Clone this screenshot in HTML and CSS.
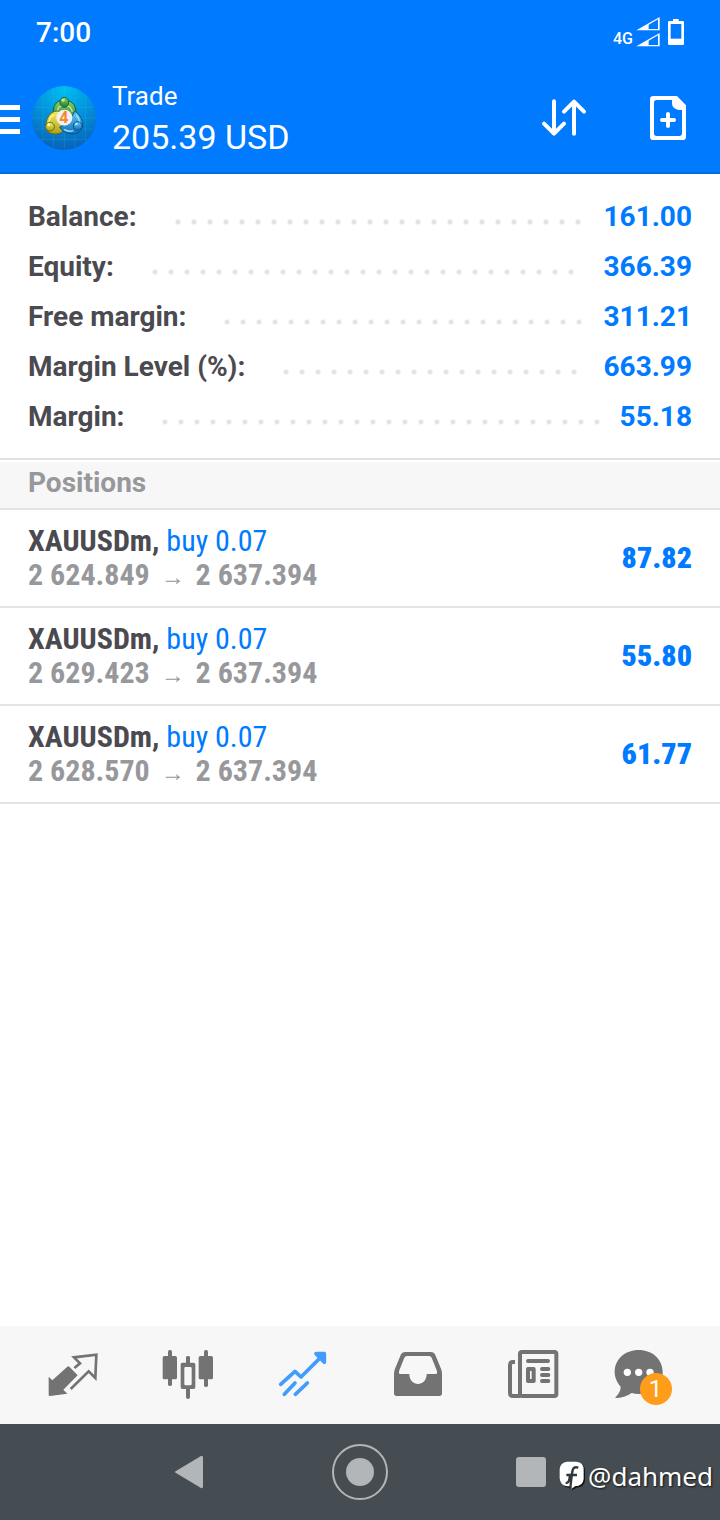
FILE: index.html
```html
<!DOCTYPE html>
<html lang="en">
<head>
<meta charset="utf-8">
<meta name="viewport" content="width=device-width, initial-scale=1">
<title>Trade</title>
<link rel="stylesheet" href="styles.css">
</head>
<body>
<header class="top">
  <div class="status">
    <span class="clock">7:00</span>
    <div class="signals">
      <span class="network">4G</span>
      <svg class="bars" viewBox="0 0 72 90" aria-hidden="true"><path d="M1 40 71 0V40ZM1 88 71 48V88Z" fill="#fff"/><path d="M38 23 66 7V36H38ZM38 71 66 55V84H38Z" fill="#007aff"/></svg>
      <svg class="battery" viewBox="0 0 48 78" aria-hidden="true"><path fill="#fff" d="M15 0H32V6H44Q48 6 48 10V74Q48 78 44 78H4Q0 78 0 74V10Q0 6 4 6H15Z"/><path fill="#007aff" d="M8 15H40V59H8Z"/></svg>
    </div>
  </div>
  <div class="appbar">
    <button class="menu" aria-label="Menu"><i></i><i></i><i></i></button>
    <svg class="avatar" viewBox="0 0 192 192" role="img" aria-label="Account">
      <defs>
        <radialGradient id="sky" cx="50%" cy="5%" r="95%"><stop offset="0" stop-color="#00bdf2"/><stop offset=".5" stop-color="#0292da"/><stop offset="1" stop-color="#0862b8"/></radialGradient>
        <linearGradient id="green" x2="0" y2="1"><stop offset="0" stop-color="#8fd070"/><stop offset="1" stop-color="#1d7c2b"/></linearGradient>
        <linearGradient id="yellow" x2="0" y2="1"><stop offset="0" stop-color="#f3ec62"/><stop offset="1" stop-color="#aba21b"/></linearGradient>
        <linearGradient id="blue" x2="0" y2="1"><stop offset="0" stop-color="#64c8f2"/><stop offset="1" stop-color="#0d70bb"/></linearGradient>
      </defs>
      <circle cx="96" cy="96" r="96" fill="url(#sky)"/>
      <path d="M32 26V167M64 7V185M97 0V192M129 7V185M160 25V167M8 64H184M0 96H192M8 129H184M26 160H166" stroke="#54c9ff" stroke-opacity=".25" stroke-width="2"/>
      <path d="M64 76C64 52 80 42 97 42S132 53 132 78C132 91 125 103 112 110L82 108C70 102 64 91 64 76Z" fill="url(#green)" stroke="#135f35" stroke-width="3"/>
      <path d="M76 78C76 64 84 58 97 58S119 65 121 78" fill="none" stroke="#b9e69b" stroke-width="4"/>
      <path d="M75 75C91 76 105 87 104 108 103 132 88 145 69 144 51 144 38 133 42 113 44 96 54 77 75 75Z" fill="url(#yellow)" stroke="#686611" stroke-width="3"/>
      <path d="M66 87C54 92 50 105 52 116" fill="none" stroke="#fffbb0" stroke-width="4"/>
      <path d="M128 76C145 84 154 106 152 122 148 139 130 147 112 143 99 141 88 134 83 123L108 112Z" fill="url(#blue)" stroke="#075392" stroke-width="3"/>
      <path d="M132 87Q144 99 142 114M96 130Q109 139 124 134" fill="none" stroke="#a0e1fc" stroke-width="4"/>
      <ellipse cx="97" cy="49" rx="13" ry="15" fill="url(#green)" stroke="#12652b" stroke-width="3"/>
      <circle cx="54" cy="122" r="13" fill="url(#yellow)" stroke="#706b13" stroke-width="3"/>
      <circle cx="137" cy="120" r="13" fill="url(#blue)" stroke="#07508f" stroke-width="3"/>
      <ellipse cx="93" cy="43" rx="5" ry="4" fill="#c5eaa9"/><circle cx="50" cy="116" r="4" fill="#fffbb4"/><circle cx="133" cy="114" r="4" fill="#b3e7ff"/>
      <circle cx="97" cy="95" r="24" fill="#f3f1f0"/>
      <text class="avatar-mark" x="96" y="112" text-anchor="middle">4</text>
    </svg>
    <div class="heading">
      <h1 class="title">Trade</h1>
      <p class="total">205.39 USD</p>
    </div>
    <div class="actions">
      <button class="action" aria-label="Sort"><svg viewBox="0 0 144 144" fill="none" stroke="#fff" stroke-width="12" stroke-linecap="round" stroke-linejoin="round"><path d="M42 22V118M12 89 42 119 72 89M102 119V23M72 53 102 23 132 53"/></svg></button>
      <button class="action" aria-label="New order"><svg viewBox="0 0 144 144"><path fill="#fff" fill-rule="evenodd" d="M28 6H99L126 34V128Q126 138 116 138H28Q18 138 18 128V16Q18 6 28 6ZM38 18Q30 18 30 26V118Q30 126 38 126H106Q114 126 114 118V48H104Q84 43 84 28V18Z"/><path d="M72 60V96M54 78H90" fill="none" stroke="#fff" stroke-width="12" stroke-linecap="round"/></svg></button>
    </div>
  </div>
</header>
<main class="content">
  <dl class="summary">
    <div class="line"><dt>Balance:</dt><dd>161.00</dd></div>
    <div class="line"><dt>Equity:</dt><dd>366.39</dd></div>
    <div class="line"><dt>Free margin:</dt><dd>311.21</dd></div>
    <div class="line"><dt>Margin Level (%):</dt><dd>663.99</dd></div>
    <div class="line"><dt>Margin:</dt><dd>55.18</dd></div>
  </dl>
  <h2 class="section">Positions</h2>
  <ul class="positions">
    <li class="position"><div><p class="symbol">XAUUSDm, <span class="side">buy 0.07</span></p><p class="prices">2 624.849 <span class="arrow">→</span> 2 637.394</p></div><strong class="profit">87.82</strong></li>
    <li class="position"><div><p class="symbol">XAUUSDm, <span class="side">buy 0.07</span></p><p class="prices">2 629.423 <span class="arrow">→</span> 2 637.394</p></div><strong class="profit">55.80</strong></li>
    <li class="position"><div><p class="symbol">XAUUSDm, <span class="side">buy 0.07</span></p><p class="prices">2 628.570 <span class="arrow">→</span> 2 637.394</p></div><strong class="profit">61.77</strong></li>
  </ul>
</main>
<nav class="tabs">
  <button class="tab" aria-label="Quotes"><svg viewBox="0 0 168 168"><path fill="currentColor" d="M14 89 25 100 70 59Q73 56 76 59L101 85 58 128 70 140 18 147Q14 147 14 143Z"/><path d="M91 63 108 49 90 31 157 23 154 93 134 73 80 126" fill="none" stroke="currentColor" stroke-width="8"/></svg></button>
  <button class="tab" aria-label="Charts"><svg viewBox="0 0 168 168" fill="currentColor"><rect x="11" y="27" width="43" height="70" rx="5"/><rect x="27" y="9" width="12" height="108" rx="5"/><path fill-rule="evenodd" d="M70 47H104Q109 47 109 52V121Q109 126 104 126H70Q65 126 65 121V52Q65 47 70 47ZM79 60Q76 60 76 64V111Q76 115 79 115H94Q98 115 98 111V64Q98 60 94 60Z"/><path d="M81 52V31Q81 27 87 27T93 31V52ZM81 122V151Q81 156 87 156T93 151V122Z"/><rect x="119" y="27" width="43" height="70" rx="5"/><rect x="135" y="9" width="12" height="111" rx="5"/></svg></button>
  <button class="tab active" aria-label="Trade" aria-current="page"><svg viewBox="0 0 168 168" fill="none" stroke="currentColor" stroke-width="11" stroke-linecap="round" stroke-linejoin="round"><path d="M20 112 63 73 81 90 149 22M31 142 63 108M64 142 100 108"/><path fill="currentColor" d="M126 20H151V46Z"/></svg></button>
  <button class="tab" aria-label="History"><svg viewBox="0 0 168 168"><path fill="currentColor" fill-rule="evenodd" d="M49 15H126Q134 15 138 22L156 65Q159 72 159 80V139Q159 147 151 147H23Q15 147 15 139V80Q15 72 18 65L36 22Q40 15 49 15ZM54 27Q48 27 46 32L31 70Q28 81 33 81H61C61 121 113 121 113 81H140Q147 81 143 70L128 32Q126 27 120 27Z"/></svg></button>
  <button class="tab" aria-label="News"><svg viewBox="0 0 168 168" fill="none" stroke="currentColor" stroke-width="12" stroke-linejoin="round"><rect x="48" y="15" width="109" height="132" rx="6"/><path d="M33 45H27Q18 45 18 54V138Q18 147 27 147H48"/><path d="M72 42H132M114 66H133M114 84H133M114 102H133" stroke-linecap="round"/><rect x="72" y="66" width="17" height="36"/></svg></button>
  <button class="tab" aria-label="Messages, 1 new"><span class="messages"><svg viewBox="-16 0 168 168"><path fill="currentColor" d="M58 9C99 9 130 37 130 75S100 141 58 141Q47 141 37 138 15 153-11 153L-12 151Q4 136 4 119C-6 108-14 92-14 75-14 37 17 9 58 9Z"/><circle cx="24" cy="76" r="11" fill="#fff"/><circle cx="58" cy="76" r="11" fill="#fff"/><circle cx="92" cy="76" r="11" fill="#fff"/></svg><span class="badge">1</span></span></button>
</nav>
<footer class="system">
  <button class="key" aria-label="Back"><svg viewBox="0 0 60 60"><path d="M17 29 42 14Q44 13 44 16V44Q44 47 42 46L17 31Q15 30 17 29Z"/></svg></button>
  <button class="key" aria-label="Home"><svg viewBox="0 0 60 60"><circle cx="30" cy="30" r="14"/><circle cx="30" cy="30" r="27" fill="none" stroke="#b2b6b8" stroke-width="2"/></svg></button>
  <button class="key" aria-label="Recent apps"><svg viewBox="0 0 60 60"><rect x="15" y="15" width="30" height="30" rx="3"/></svg></button>
  <div class="credit"><svg viewBox="0 0 78 90" aria-hidden="true"><path fill="#111" d="M28 6H56Q78 8 78 30V58Q76 80 52 80L40 88 39 80H28Q8 78 6 56V28Q8 8 28 6Z"/><path fill="#fff" d="M24 2H52Q74 4 74 26V54Q72 76 48 76L36 85 35 76H24Q4 74 2 52V24Q4 4 24 2Z"/><path d="M58 20C42 15 41 25 39 38L36 62Q34 76 35 84M20 66C28 66 29 62 31 54L34 38M22 42H54" fill="none" stroke="#30383c" stroke-width="7"/></svg><span>@dahmed</span></div>
</footer>
</body>
</html>
```
FILE: styles.css
```css
* { box-sizing: border-box; }
body {
  margin: 0;
  min-height: 100vh;
  display: flex;
  flex-direction: column;
  background: #fff;
  color: #4a4a50;
  font-family: Roboto, "Liberation Sans", sans-serif;
  font-size: 28px;
}
h1, h2, p, dl, dd, ul { margin: 0; padding: 0; }
button { border: 0; padding: 0; background: none; color: inherit; font: inherit; }
svg { display: block; }

.top { background: #007aff; color: #fff; border-bottom: 2px solid #006ce0; }
.status {
  height: 64px;
  padding: 0 36px;
  display: flex;
  align-items: center;
  justify-content: space-between;
}
.clock { font-weight: 500; }
.signals { display: flex; align-items: center; }
.network { font-size: 16px; line-height: 16px; font-weight: 500; margin: 14px 3px 0 0; }
.bars { width: 24px; height: 30px; }
.battery { width: 16px; height: 26px; margin-left: 8px; }
.appbar { height: 108px; display: flex; align-items: center; }
.menu { width: 20px; display: grid; gap: 7px; margin: 2px 12px 0 0; }
.menu i { height: 5px; background: #fff; }
.avatar { width: 64px; height: 64px; }
.avatar-mark { font: 700 46px "Open Sans", sans-serif; fill: #f18a31; }
.heading { margin: 2px 0 0 16px; flex: 1; }
.title { font-size: 26px; line-height: 36px; font-weight: 400; }
.total { font-size: 34px; line-height: 46px; }
.actions { display: flex; gap: 56px; padding-right: 28px; }
.action svg { width: 48px; height: 48px; }

.content { flex: 1; }
.summary { padding: 17px 28px; border-bottom: 2px solid #e3e3e3; font-weight: 700; }
.line { display: flex; align-items: center; height: 50px; }
.line dd { color: #007aff; flex: 1; display: flex; align-items: center; }
.line dd::before {
  content: "";
  flex: 1;
  height: 6px;
  margin: 11px 20px 0 33px;
  background: radial-gradient(circle at 8px 3px, #e3e3e3 2px, transparent 3px) 0 0 / 16px 6px;
}
.section {
  margin-top: 2px;
  padding: 0 28px;
  height: 48px;
  font-size: 28px;
  line-height: 42px;
  font-weight: 700;
  color: #97989c;
  background: #f7f7f7;
  border-bottom: 2px solid #e3e3e3;
}
.positions {
  list-style: none;
  font-family: "Roboto Condensed", "Liberation Sans Narrow", Roboto, sans-serif;
  font-size: 30px;
  line-height: 34px;
  font-weight: 700;
}
.position {
  display: flex;
  align-items: center;
  justify-content: space-between;
  padding: 14px 28px;
  border-bottom: 2px solid #e3e3e3;
}
.side { color: #007aff; font-weight: 400; }
.prices { color: #97989c; }
.arrow { margin: 0 4px; font: 400 24px/24px "Liberation Sans", sans-serif; }
.profit { color: #007aff; }

.tabs { display: flex; padding: 0 16px 0 14px; height: 98px; align-items: center; background: #f7f7f7; color: #737373; }
.tab { flex: 1; display: flex; justify-content: center; }
.tab svg { width: 56px; height: 56px; }
.active { color: #409cff; }
.messages { position: relative; margin-right: 10px; }
.badge {
  position: absolute;
  right: -2px;
  bottom: -2px;
  width: 32px;
  height: 32px;
  border-radius: 50%;
  background: #ff9d1b;
  color: #fff;
  font-size: 24px;
  line-height: 32px;
}
.system { position: relative; display: flex; align-items: center; justify-content: center; gap: 111px; height: 96px; background: #454d53; }
.key svg { width: 60px; height: 60px; fill: #b2b6b8; }
.credit {
  position: absolute;
  right: 7px;
  bottom: 26px;
  display: flex;
  align-items: center;
  gap: 3px;
  color: #fff;
  font: 400 26px/36px "Noto Sans", sans-serif;
  text-shadow: 1px 1px 2px #111;
}
.credit svg { width: 26px; height: 30px; }
```
